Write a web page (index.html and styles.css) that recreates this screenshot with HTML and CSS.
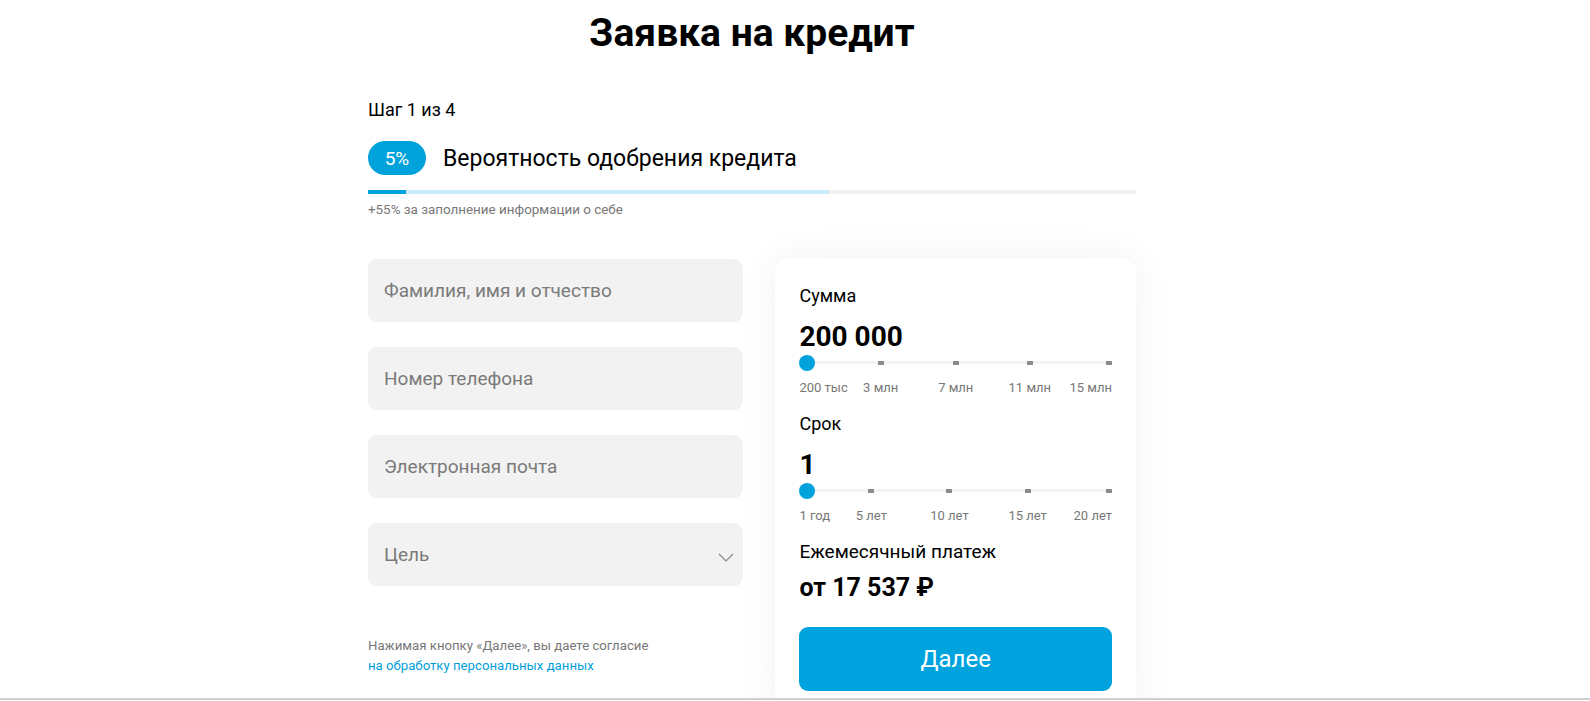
FILE: index.html
```html
<!DOCTYPE html>
<html lang="ru">
<head>
<meta charset="utf-8">
<title>Заявка на кредит</title>
<link rel="stylesheet" href="styles.css">
</head>
<body>
<main class="page">
  <h1 class="title">Заявка на кредит</h1>
  <div class="step">Шаг 1 из 4</div>
  <div class="chance">
    <span class="badge">5%</span>
    <span class="chance-text">Вероятность одобрения кредита</span>
  </div>
  <div class="progress">
    <div class="progress-done"></div>
    <div class="progress-next"></div>
  </div>
  <div class="hint">+55% за заполнение информации о себе</div>

  <div class="columns">
    <div class="form">
      <div class="field">Фамилия, имя и отчество</div>
      <div class="field">Номер телефона</div>
      <div class="field">Электронная почта</div>
      <div class="field field-select">
        <span>Цель</span>
        <svg class="chevron" width="16" height="9" viewBox="0 0 16 9"><path d="M1 1l7 7 7-7" fill="none" stroke="#8a8a8a" stroke-width="1.2"/></svg>
      </div>
      <p class="consent">Нажимая кнопку «Далее», вы даете согласие<br><a class="consent-link" href="#">на обработку персональных данных</a></p>
    </div>

    <div class="card">
      <div class="label">Сумма</div>
      <div class="value">200 000</div>
      <div class="slider">
        <div class="track"></div>
        <span class="tick" style="left:26%"></span>
        <span class="tick" style="left:50%"></span>
        <span class="tick" style="left:73.7%"></span>
        <span class="tick" style="left:99%"></span>
        <span class="thumb"></span>
      </div>
      <div class="scale">
        <span class="mark mark-first">200 тыс</span>
        <span class="mark" style="left:26%">3 млн</span>
        <span class="mark" style="left:50%">7 млн</span>
        <span class="mark" style="left:73.7%">11 млн</span>
        <span class="mark mark-last">15 млн</span>
      </div>

      <div class="label label-gap">Срок</div>
      <div class="value">1</div>
      <div class="slider">
        <div class="track"></div>
        <span class="tick" style="left:23%"></span>
        <span class="tick" style="left:48%"></span>
        <span class="tick" style="left:73%"></span>
        <span class="tick" style="left:99%"></span>
        <span class="thumb"></span>
      </div>
      <div class="scale">
        <span class="mark mark-first">1 год</span>
        <span class="mark" style="left:23%">5 лет</span>
        <span class="mark" style="left:48%">10 лет</span>
        <span class="mark" style="left:73%">15 лет</span>
        <span class="mark mark-last">20 лет</span>
      </div>

      <div class="label label-pay">Ежемесячный платеж</div>
      <div class="payment">от 17 537 ₽</div>
      <button class="next" type="button">Далее</button>
    </div>
  </div>
</main>
<div class="bottom-edge"></div>
</body>
</html>
```
FILE: styles.css
```css
html, body {
  margin: 0;
  padding: 0;
  background: #fff;
  overflow: hidden;
}
body {
  font-family: Roboto, "Liberation Sans", sans-serif;
  color: #000;
  height: 701px;
}
.page {
  width: 768px;
  margin-left: 368px;
  padding-top: 9px;
}
.title {
  margin: 0;
  text-align: center;
  font-size: 39px;
  line-height: 48px;
  font-weight: 700;
}
.step {
  margin-top: 41px;
  font-size: 18px;
  line-height: 24px;
}
.chance {
  margin-top: 19px;
  display: flex;
  align-items: center;
  gap: 17px;
  height: 34px;
}
.badge {
  width: 58px;
  height: 34px;
  border-radius: 17px;
  background: #00a2dc;
  color: #fff;
  font-size: 19px;
  display: flex;
  align-items: center;
  justify-content: center;
}
.chance-text {
  font-size: 23px;
}
.progress {
  margin-top: 15px;
  height: 4px;
  background: #f1f1f1;
  display: flex;
}
.progress-done {
  width: 38px;
  background: #00a2dc;
}
.progress-next {
  width: 423px;
  background: #c6e9fb;
}
.hint {
  margin-top: 8px;
  font-size: 13.4px;
  line-height: 16px;
  color: #777;
}
.columns {
  margin-top: 40px;
  display: flex;
  gap: 32px;
  align-items: flex-start;
}
.form {
  width: 376px;
  padding-top: 1px;
  display: flex;
  flex-direction: column;
  gap: 25px;
}
.field {
  height: 63px;
  border-radius: 9px;
  background: #f2f2f2;
  color: #7a7a7a;
  font-size: 19px;
  padding: 0 16px;
  display: flex;
  align-items: center;
  box-sizing: border-box;
}
.field-select {
  justify-content: space-between;
  padding-right: 9px;
}
.chevron {
  margin-top: 6px;
}
.consent {
  margin: 25px 0 0;
  font-size: 13.2px;
  line-height: 20px;
  color: #777;
}
.consent-link {
  color: #009fdb;
  text-decoration: none;
}
.card {
  width: 361px;
  box-sizing: border-box;
  padding: 26px 24px 24px;
  background: #fff;
  border-radius: 14px;
  box-shadow: 0 0 40px rgba(0, 0, 0, 0.06);
}
.label {
  font-size: 18px;
  line-height: 24px;
}
.label-gap {
  margin-top: 16px;
}
.label-pay {
  margin-top: 16px;
  font-size: 19px;
}
.value {
  margin-top: 13px;
  font-size: 28px;
  line-height: 32px;
  font-weight: 700;
}
.slider {
  position: relative;
  height: 16px;
  margin-top: 2px;
}
.track {
  position: absolute;
  left: 8px;
  right: 0;
  top: 6px;
  height: 3px;
  background: #f3f3f3;
}
.tick {
  position: absolute;
  top: 6px;
  width: 6px;
  height: 4px;
  margin-left: -3px;
  background: #8c8c8c;
}
.thumb {
  position: absolute;
  left: 0;
  top: 0;
  width: 16px;
  height: 16px;
  border-radius: 50%;
  background: #00a2dc;
}
.scale {
  position: relative;
  height: 16px;
  margin-top: 9px;
  font-size: 13px;
  line-height: 16px;
  color: #777;
}
.mark {
  position: absolute;
  top: 0;
  transform: translateX(-50%);
  white-space: nowrap;
}
.mark-first {
  left: 0;
  transform: none;
}
.mark-last {
  left: auto;
  right: 0;
  transform: none;
}
.payment {
  margin-top: 9px;
  font-size: 25px;
  line-height: 30px;
  font-weight: 700;
}
.next {
  margin-top: 24px;
  width: 100%;
  height: 64px;
  border: 0;
  border-radius: 9px;
  background: #00a3dd;
  color: #fff;
  font-family: inherit;
  font-size: 24px;
  cursor: pointer;
}
.bottom-edge {
  position: fixed;
  left: 0;
  right: 0;
  bottom: 1px;
  height: 2px;
  background: #cfcfcf;
  box-shadow: 0 -12px 30px rgba(0, 0, 0, 0.03);
}
```
